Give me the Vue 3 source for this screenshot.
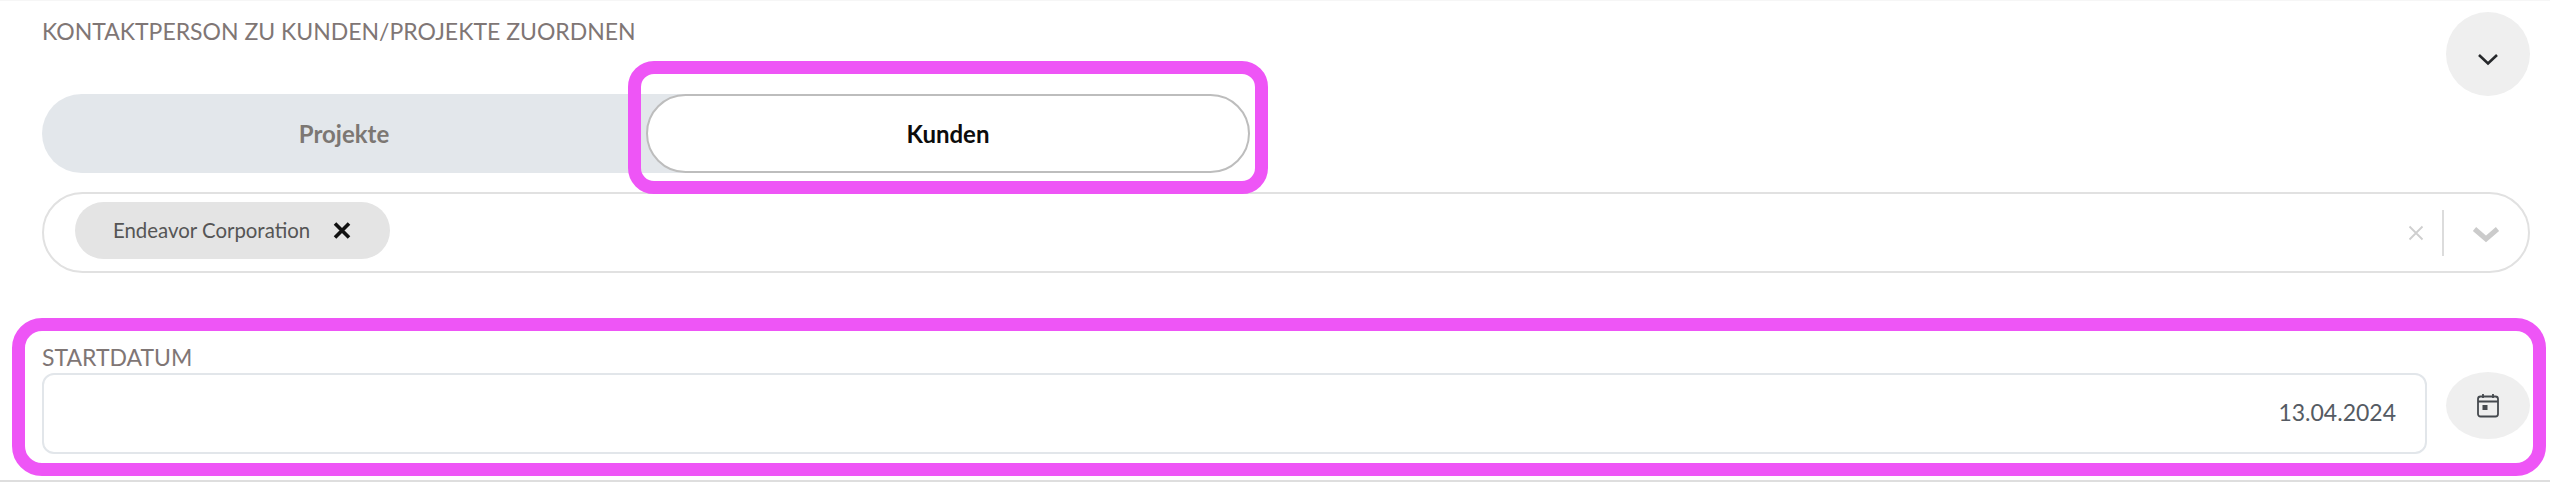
<template>
  <div class="page">
    <div class="head">
      <span class="section-label">KONTAKTPERSON ZU KUNDEN/PROJEKTE ZUORDNEN</span>
      <button class="round-btn head-btn" type="button">
        <svg width="22" height="13" viewBox="0 0 22 13">
          <path d="M2 2l9 8.500L20 2" fill="none" stroke="#26282b" stroke-width="2.600" />
        </svg>
      </button>
    </div>

    <div class="tabs">
      <button
        v-for="tab in tabs"
        :key="tab"
        type="button"
        class="tab"
        :class="{ active: tab === activeTab }"
        @click="activeTab = tab"
      >
        {{ tab }}
        <span v-if="tab === 'Kunden'" class="marker marker-tab"></span>
      </button>
    </div>

    <div class="select">
      <div class="chips">
        <span v-for="chip in chips" :key="chip" class="chip">
          {{ chip }}
          <svg class="chip-x" width="18" height="17" viewBox="0 0 18 17">
            <path d="M2 1.500l14 14M16 1.500l-14 14" fill="none" stroke="#111" stroke-width="3.600" />
          </svg>
        </span>
      </div>
      <svg class="clear-x" width="16" height="16" viewBox="0 0 16 16">
        <path d="M1.500 1.500l13 13M14.500 1.500l-13 13" fill="none" stroke="#cfcfcf" stroke-width="1.800" />
      </svg>
      <span class="divider"></span>
      <svg class="select-arrow" width="28" height="17" viewBox="0 0 28 17">
        <path d="M2.500 3l11.500 10L25.500 3" fill="none" stroke="#cbcbcb" stroke-width="5" />
      </svg>
    </div>

    <div class="date-block">
      <span class="marker marker-date"></span>
      <label class="section-label date-label">STARTDATUM</label>
      <div class="date-row">
        <div class="date-input">13.04.2024</div>
        <button class="round-btn date-btn" type="button">
          <svg width="22" height="25" viewBox="0 0 22 25">
            <rect x="1" y="3.500" width="20" height="20" rx="2.500" fill="none" stroke="#45494e" stroke-width="1.800" />
            <path d="M1 8.500h20M6 1v4M16 1v4" fill="none" stroke="#45494e" stroke-width="1.800" />
            <rect x="5.500" y="12" width="5" height="5" fill="#45494e" />
          </svg>
        </button>
      </div>
    </div>
  </div>
</template>

<script setup>
import { ref } from 'vue';

const tabs = ['Projekte', 'Kunden'];
const activeTab = ref('Kunden');
const chips = ['Endeavor Corporation'];
</script>

<style scoped>
.page {
  position: relative;
  box-sizing: border-box;
  width: 2550px;
  height: 482px;
  padding: 0 20px 0 42px;
  background: #fff;
  border-top: 1px solid #f6f6f6;
  border-bottom: 2px solid #dedede;
  font-family: Lato, 'Liberation Sans', sans-serif;
  overflow: hidden;
}

.section-label {
  color: #7f7675;
  font-size: 23px;
  line-height: 26px;
}

.head {
  display: flex;
  justify-content: space-between;
  height: 93px;
  padding-top: 11px;
  box-sizing: border-box;
}

.head .section-label {
  margin-top: 6px;
}

.round-btn {
  display: flex;
  align-items: center;
  justify-content: center;
  width: 84px;
  padding: 0;
  border: none;
  border-radius: 50%;
  background: #efefef;
}

.head-btn {
  height: 84px;
  flex: none;
  padding-top: 10px;
}

.tabs {
  display: flex;
  width: 1208px;
  height: 79px;
  border-radius: 40px 0 0 40px;
  background: linear-gradient(to right, #e3e7eb 648px, transparent 648px);
}

.tab {
  position: relative;
  flex: 1;
  padding: 0;
  border: 2px solid transparent;
  border-radius: 40px;
  background: transparent;
  color: #7c7773;
  font-family: inherit;
  font-size: 24px;
  font-weight: 700;
}

.tab.active {
  background: #fff;
  border-color: #bdbdbd;
  color: #0c0c0c;
}

.marker {
  position: absolute;
  box-sizing: border-box;
  border: 13px solid #ee55f6;
  pointer-events: none;
}

.marker-tab {
  top: -35px;
  right: -20px;
  bottom: -23px;
  left: -20px;
  border-radius: 26px;
}

.select {
  display: flex;
  align-items: center;
  box-sizing: border-box;
  height: 81px;
  margin-top: 19px;
  padding: 0 28px 0 31px;
  border: 2px solid #e1e1e1;
  border-radius: 41px;
}

.chips {
  flex: 1;
  display: flex;
  padding-bottom: 5px;
}

.chip {
  display: flex;
  align-items: center;
  gap: 23px;
  height: 57px;
  padding: 0 39px 0 38px;
  border-radius: 29px;
  background: #e4e4e4;
  color: #555;
  font-size: 20.400px;
}

.clear-x {
  margin-right: 18px;
}

.divider {
  width: 2px;
  height: 46px;
  margin-right: 28px;
  background: #dcdcdc;
}

.select-arrow {
  margin-top: 4px;
}

.date-block {
  position: relative;
  margin-top: 71px;
}

.date-label {
  display: block;
  height: 29px;
}

.date-row {
  display: flex;
  align-items: flex-start;
  gap: 19px;
}

.date-input {
  flex: 1;
  box-sizing: border-box;
  height: 81px;
  padding-right: 29px;
  border: 2px solid #e2e6ea;
  border-radius: 12px;
  color: #555b63;
  font-size: 23px;
  line-height: 75px;
  text-align: right;
}

.date-btn {
  height: 67px;
  flex: none;
  margin-top: -1px;
}

.marker-date {
  top: -26px;
  right: -16px;
  bottom: -22px;
  left: -30px;
  border-radius: 30px;
}
</style>
